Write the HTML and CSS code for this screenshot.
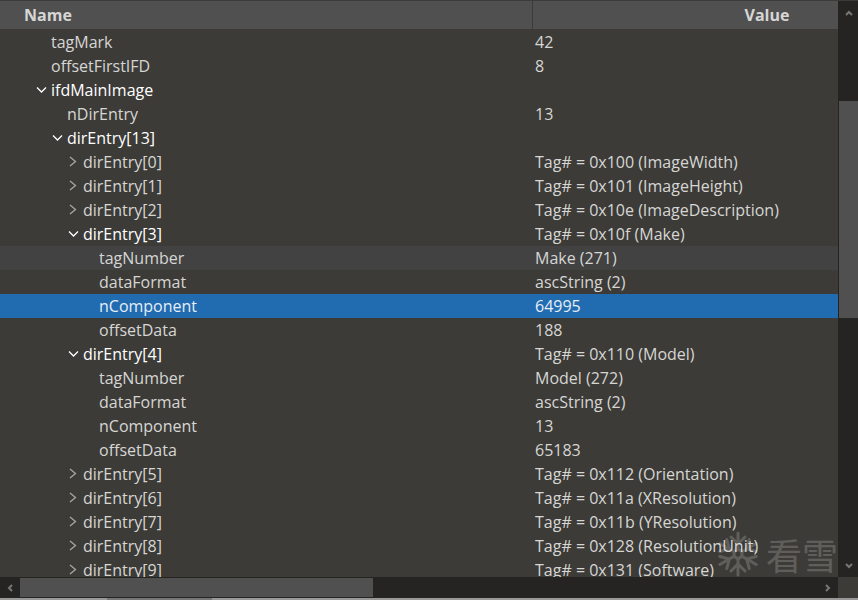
FILE: index.html
```html
<!DOCTYPE html>
<html lang="en">
<head>
<meta charset="utf-8">
<title>Template Results</title>
<link rel="stylesheet" href="styles.css">
</head>
<body>
<svg class="defs" aria-hidden="true">
  <symbol id="closed" viewBox="0 0 16 16"><path d="M3 3 L8.500 7.500 L3 12"/></symbol>
  <symbol id="open" viewBox="0 0 16 16"><path d="M2 5.500 L6.500 10 L11 5.500"/></symbol>
  <symbol id="arrow" viewBox="0 0 8 8"><path d="M1 6 L4 3 L7 6"/></symbol>
</svg>
<div class="panel">
  <main class="view">
    <table class="tree">
      <colgroup><col class="col-name"><col class="col-value"></colgroup>
      <thead><tr><th scope="col">Name</th><th scope="col">Value</th></tr></thead>
      <tbody id="rows"></tbody>
    </table>
    <div class="watermark">
      <svg class="flake" viewBox="0 0 42 46" aria-hidden="true">
        <g id="arm"><path d="M21 19V2M14 6l7 7 7-7"/></g>
        <use href="#arm" transform="rotate(60 21 23)"/>
        <use href="#arm" transform="rotate(120 21 23)"/>
        <use href="#arm" transform="rotate(180 21 23)"/>
        <use href="#arm" transform="rotate(240 21 23)"/>
        <use href="#arm" transform="rotate(300 21 23)"/>
        <path d="M21 18l4 2.500v5l-4 2.500-4-2.500v-5z"/>
      </svg>
      <span lang="zh">看雪</span>
    </div>
  </main>
  <div class="bar vertical">
    <button class="step" aria-label="Scroll up"><svg><use href="#arrow"/></svg></button>
    <div class="track"><div class="thumb"></div></div>
    <button class="step down" aria-label="Scroll down"><svg><use href="#arrow"/></svg></button>
  </div>
  <div class="bar horizontal">
    <button class="step left" aria-label="Scroll left"><svg><use href="#arrow"/></svg></button>
    <div class="track"><div class="thumb"></div></div>
    <button class="step right" aria-label="Scroll right"><svg><use href="#arrow"/></svg></button>
  </div>
  <div class="edge"><div class="edge-tab"></div></div>
</div>
<script src="tree.js"></script>
</body>
</html>
```
FILE: styles.css
```css
* { box-sizing: border-box; }
body {
  margin: 0;
  background: #3c3b37;
  color: #d6d6d4;
  font: 16px/24px "Open Sans", "Noto Sans", sans-serif;
}
button {
  padding: 0;
  border: 0;
  background: none;
  color: inherit;
  font: inherit;
}
svg { fill: none; stroke: currentColor; }
.defs { position: absolute; width: 0; height: 0; }

.panel {
  display: grid;
  grid-template-columns: minmax(0, 1fr) 20px;
  grid-template-rows: minmax(0, 1fr) 21px 2px;
  height: 100vh;
  padding-top: 1px;
}
.view { position: relative; overflow: hidden; }

.tree { width: 1001px; table-layout: fixed; border-collapse: separate; border-spacing: 0; }
.col-name { width: 533px; }
th {
  height: 29px;
  padding: 0;
  background: #505050;
  border-bottom: 1px solid #3c3b37;
  font-weight: 700;
}
th:first-child { padding-left: 24px; border-right: 1px solid #3c3b37; text-align: left; }
td { height: 24px; padding: 0 0 0 2px; white-space: nowrap; }
.hover td { background: #424242; }
.selected td { background: #216bb0; color: #e6eef6; }

.name { display: flex; align-items: center; padding-left: 49px; }
.toggle { display: flex; align-items: center; }
.toggle svg { width: 16px; height: 16px; margin-left: -16px; color: #a5a5a2; stroke-width: 1.3; }
.open, .open .toggle svg { color: #fff; }
.level-2 { padding-left: 65px; }
.level-3 { padding-left: 81px; }
.level-4 { padding-left: 97px; }

.bar { display: flex; background: #252422; color: #777775; }
.vertical { flex-direction: column; padding-left: 1px; }
.horizontal { padding: 1px 0; }
.step { display: grid; place-items: center; flex: none; width: 20px; height: 20px; }
.horizontal .step { height: 19px; }
.step svg { width: 8px; height: 8px; stroke-width: 2; }
.vertical .step { width: 19px; height: 23px; }
.down svg { transform: rotate(180deg); }
.left svg { transform: rotate(-90deg); }
.right svg { transform: rotate(90deg); }
.track { display: flex; flex: 1; }
.vertical .track { flex-direction: column; padding-top: 77px; }
.thumb { background: #505050; }
.vertical .thumb { height: 48%; }
.horizontal .thumb { width: 353px; }

.edge { grid-column: 1 / -1; padding-left: 107px; background: #999; }
.edge-tab { width: 105px; height: 2px; background: #777; }

.watermark {
  position: absolute;
  right: 0;
  bottom: 0;
  display: flex;
  align-items: center;
  gap: 7px;
  color: #fff;
  opacity: 0.18;
  font: 400 36px/46px "Noto Sans CJK SC", sans-serif;
}
.flake { width: 42px; height: 46px; stroke-width: 3; stroke-linecap: round; }
```
FILE: tree.js
```js
// Each row: level, name, value, expander state, row state
const rows = [
  [1, "tagMark", "42"],
  [1, "offsetFirstIFD", "8"],
  [1, "ifdMainImage", "", "open"],
  [2, "nDirEntry", "13"],
  [2, "dirEntry[13]", "", "open"],
  [3, "dirEntry[0]", "Tag# = 0x100 (ImageWidth)", "closed"],
  [3, "dirEntry[1]", "Tag# = 0x101 (ImageHeight)", "closed"],
  [3, "dirEntry[2]", "Tag# = 0x10e (ImageDescription)", "closed"],
  [3, "dirEntry[3]", "Tag# = 0x10f (Make)", "open"],
  [4, "tagNumber", "Make (271)", "", "hover"],
  [4, "dataFormat", "ascString (2)"],
  [4, "nComponent", "64995", "", "selected"],
  [4, "offsetData", "188"],
  [3, "dirEntry[4]", "Tag# = 0x110 (Model)", "open"],
  [4, "tagNumber", "Model (272)"],
  [4, "dataFormat", "ascString (2)"],
  [4, "nComponent", "13"],
  [4, "offsetData", "65183"],
  [3, "dirEntry[5]", "Tag# = 0x112 (Orientation)", "closed"],
  [3, "dirEntry[6]", "Tag# = 0x11a (XResolution)", "closed"],
  [3, "dirEntry[7]", "Tag# = 0x11b (YResolution)", "closed"],
  [3, "dirEntry[8]", "Tag# = 0x128 (ResolutionUnit)", "closed"],
  [3, "dirEntry[9]", "Tag# = 0x131 (Software)", "closed"]
];

document.getElementById("rows").innerHTML = rows.map(([level, name, value, toggle = "", state = ""]) => {
  const label = toggle
    ? `<button class="toggle" aria-expanded="${toggle === "open"}"><svg aria-hidden="true"><use href="#${toggle}"/></svg>${name}</button>`
    : name;
  return `<tr class="${state}"><td><div class="name level-${level} ${toggle}">${label}</div></td><td>${value}</td></tr>`;
}).join("");
```
